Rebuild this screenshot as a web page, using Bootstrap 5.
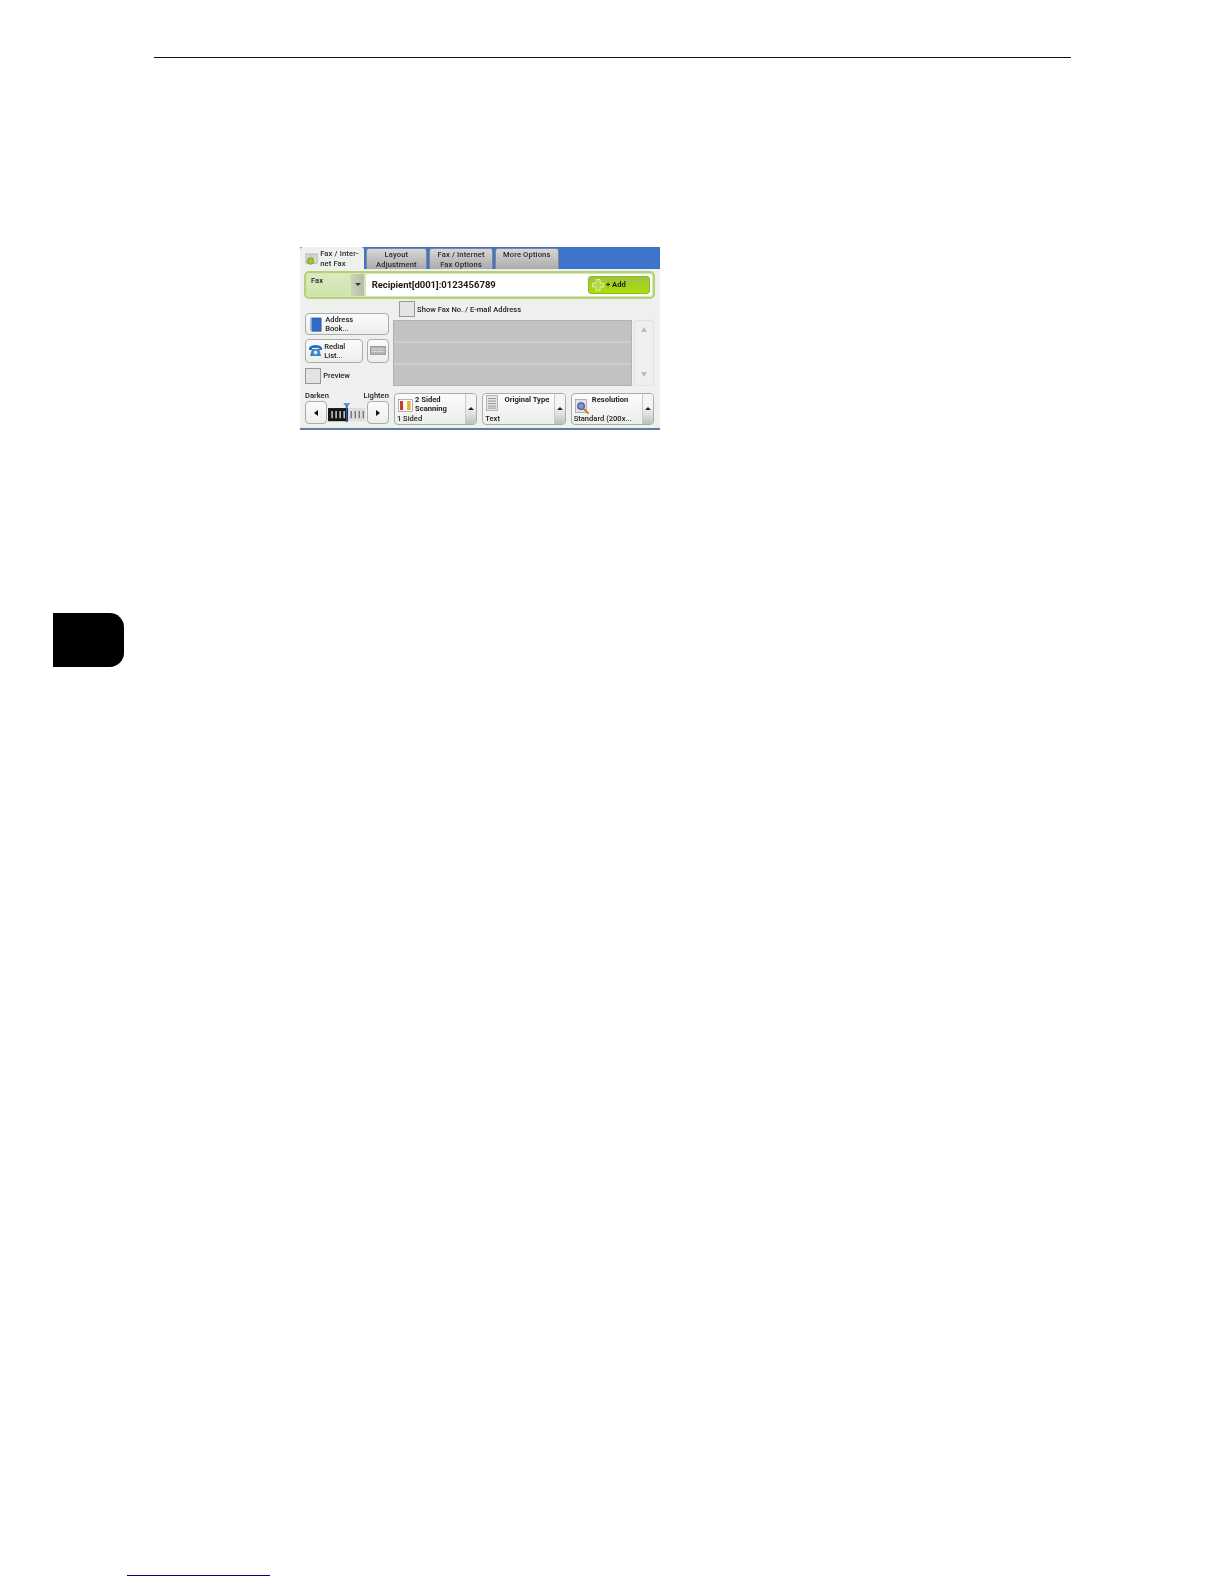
<!DOCTYPE html>
<html lang="en"><head><meta charset="utf-8"><title>Fax</title>
<link rel="stylesheet" href="https://cdn.jsdelivr.net/npm/bootstrap@5.3.0/dist/css/bootstrap.min.css">
<style>
html,body{background:#fff;margin:0;height:1584px;overflow:hidden}
.pagewrap{zoom:1.0101}
.hdrrule{margin:56px 0 0 152.500px;width:908px;height:1.500px;background:#111}
.panel{margin:187.500px 0 0 297px;width:356px;height:181px;background:#eef0ee;border-bottom:2px solid #5d7fa8;font-family:Roboto,"Noto Sans",sans-serif;font-size:7.500px;line-height:9px;color:#222;font-weight:500;filter:blur(.3px);overflow:hidden}
.tabrow{height:21px;background:#3e74c9;padding-left:0;gap:2px;align-items:flex-end}
.tabx{height:20px;width:61px;border-radius:3px 3px 0 0;background:linear-gradient(#d6d7d6,#a9aaa9);border:1px solid #7d8894;border-bottom:0;text-align:center;padding-top:1px;color:#2b2b2b;letter-spacing:.15px}
.tabx.wide{width:63px}
.tabx.active{width:63px;height:21px;background:#eef0ee;border-color:#eef0ee;display:flex;align-items:center;gap:2px;padding:0 0 0 4px;text-align:left}
.greenbar{margin:2px 5px 0 4px;height:28px;border:2px solid #b3d377;border-radius:5px;background:#d6e7b6;padding:1px;gap:2px}
.faxsel{width:42px;background:linear-gradient(#dcebc3,#cfe3ab);padding:2px 4px;border-radius:2px 0 0 2px}
.faxarrow{width:12px;background:linear-gradient(90deg,#c9d4b8,#b5bcab);display:flex;align-items:center;justify-content:center}
.tridown{width:0;height:0;border-left:3.500px solid transparent;border-right:3.500px solid transparent;border-top:3.500px solid #333}
.recip{flex:1;background:#fff;padding:0 2px 0 6px;border-radius:2px;align-items:center;justify-content:space-between}
.reciptxt{font-size:9.400px;font-weight:700;color:#1a1a1a}
.addbtn{width:61px;height:18px;background:linear-gradient(#9cc53c,#aede08);border:1px solid #8eb62d;border-radius:3px;display:flex;align-items:center;gap:1px;padding-left:2px;color:#1a2a00;font-weight:700}
.mainrow{padding:2px 5px 0 5px;gap:4px}
.leftcol{width:83px;padding-top:12px}
.rightcol{width:259px}
.softbtn{background:linear-gradient(#fbfbfb,#eceeec);border:1px solid #a9adab;border-radius:4px;display:flex;align-items:center}
.addr{height:22px;width:83px;padding-left:3px;gap:3px}
.redial{height:23px;width:58px;padding-left:2px;gap:1px}
.kbd{height:23px;width:22px;justify-content:center}
.tick{width:16px;height:16px;border:1px solid #999;background:#e3e5e3;flex:none}
.showrow{padding-left:6px;gap:2px;align-items:center;height:16px}
.listwrap{margin-top:3px;gap:2px;height:65px}
.listbox{width:237px;background:#c1c2c1;border:1px solid #b0b1b0;padding:0}
.listline{flex:1;border-bottom:2px solid #cdcecd}
.listline:last-child{border-bottom:0}
.scrollcol{width:20px;border:1px solid #e0e2e0;border-radius:3px;align-items:center;justify-content:space-between;padding:6px 1px 8px 0}
.tri-up-s{width:0;height:0;border-left:3px solid transparent;border-right:3px solid transparent;border-bottom:5px solid #bcbebc}
.tri-dn-s{width:0;height:0;border-left:3px solid transparent;border-right:3px solid transparent;border-top:5px solid #bcbebc}
.prevrow{margin-top:5px;gap:2px;align-items:center}
.btmrow{margin:7px 5px 0 5px;gap:5px}
.density{width:83px;margin-top:-2px}
.denlabels{height:8px;margin-bottom:2px;justify-content:space-between}
.denctl{height:23px}
.stepbtn{width:22px;height:23px;justify-content:center;flex:none}
.triL{width:0;height:0;border-top:3px solid transparent;border-bottom:3px solid transparent;border-right:4px solid #111}
.triR{width:0;height:0;border-top:3px solid transparent;border-bottom:3px solid transparent;border-left:4px solid #111}
.featbtn{width:82.500px;height:31.500px;align-items:stretch;overflow:hidden}
.featmain{flex:1;min-width:0;padding:1px 2px 0 3px;position:relative}
.featarrow{width:11px;background:linear-gradient(#f3f4f3 45%,#bfc1bf);border-left:1px solid #c8cac8;display:flex;align-items:center;justify-content:center}
.triU{width:0;height:0;border-left:3.500px solid transparent;border-right:3.500px solid transparent;border-bottom:3.500px solid #222}
.feathead{gap:2px}
.featname{font-weight:700;color:#222;white-space:nowrap}
.featval{position:absolute;left:2px;bottom:1px;white-space:nowrap}
.thumb{margin:181px 0 0 52px;width:71px;height:53px;background:#000;border-radius:0 14px 14px 0}
.footrule{margin:899px 0 0 126px;width:141px;height:1.500px;background:#00008b}
</style></head>
<body>
<div class="pagewrap">
<div class="hdrrule"></div>
<div class="panel">
  <div class="tabrow d-flex">
    <div class="tabx active">
      <svg width="13" height="13" viewBox="0 0 13 13"><rect x="1" y="2" width="11" height="9" fill="#dfe2df" stroke="#9a9d9a" stroke-width=".7"/><path d="M3 4h7M3 6h7" stroke="#aaa" stroke-width=".7"/><circle cx="5.500" cy="9" r="3.200" fill="#a5c634" stroke="#5f7e1f" stroke-width=".6"/></svg>
      <span>Fax / Inter-<br>net Fax</span></div>
    <div class="tabx">Layout<br>Adjustment</div>
    <div class="tabx wide">Fax / Internet<br>Fax Options</div>
    <div class="tabx wide">More Options</div>
  </div>
  <div class="greenbar d-flex">
    <div class="faxsel">Fax</div>
    <div class="faxarrow"><span class="tridown"></span></div>
    <div class="recip d-flex">
      <span class="reciptxt">Recipient[d001]:0123456789</span>
      <span class="addbtn"><svg width="14" height="14" viewBox="0 0 14 14"><path d="M5 1.500h4v3.500h3.500v4H9v3.500H5V9H1.500V5H5z" fill="#b6d84a" stroke="#dff0a0" stroke-width=".9"/></svg>+ Add</span>
    </div>
  </div>
  <div class="mainrow d-flex">
    <div class="leftcol">
      <div class="softbtn addr">
        <svg width="13" height="15" viewBox="0 0 13 15"><path d="M2 1h10v13H3a1.500 1.500 0 0 1-1-1z" fill="#2f6cc4" stroke="#1d4b94" stroke-width=".7"/><path d="M2.500 1v13" stroke="#7ea7e0"/></svg>
        <span>Address<br>Book...</span></div>
      <div class="d-flex gap-1 mt-1 redialrow">
        <div class="softbtn redial">
          <svg width="15" height="13" viewBox="0 0 15 13"><path d="M1 4c1-4 12-4 13 0v2h-3V4H4v2H1z" fill="#2f6fb5"/><path d="M4 5h7l2 7H2z" fill="#3c80c6"/><circle cx="7.500" cy="8.500" r="2" fill="#cfe2f5"/></svg>
          <span>Redial<br>List...</span></div>
        <div class="softbtn kbd"><svg width="16" height="9" viewBox="0 0 16 9"><rect x=".5" y=".5" width="15" height="8" fill="#b4b6b4" stroke="#9a9c9a"/><path d="M2 3h12M2 5.500h12" stroke="#ececec" stroke-dasharray="1.500 .8"/></svg></div>
      </div>
      <div class="prevrow d-flex"><span class="tick"></span><span>Preview</span></div>
    </div>
    <div class="rightcol">
      <div class="showrow d-flex"><span class="tick"></span><span>Show Fax No. / E-mail Address</span></div>
      <div class="listwrap d-flex">
        <div class="listbox d-flex flex-column"><div class="listline"></div><div class="listline"></div><div class="listline"></div></div>
        <div class="scrollcol d-flex flex-column"><span class="tri-up-s"></span><span class="tri-dn-s"></span></div>
      </div>
    </div>
  </div>
  <div class="btmrow d-flex">
    <div class="density">
      <div class="denlabels d-flex"><span>Darken</span><span>Lighten</span></div>
      <div class="denctl d-flex">
        <div class="softbtn stepbtn"><span class="triL"></span></div>
        <svg width="39" height="23" viewBox="0 0 39 23"><rect x="1" y="7" width="20" height="13" fill="#151515"/><rect x="21" y="7" width="17" height="13" fill="#dcdddc"/><path d="M5 10v7M9 10v7M13 10v7M17 10v7" stroke="#d8d8d8" stroke-width="1.400"/><path d="M24 10v7M28 10v7M32 10v7M36 10v7" stroke="#777" stroke-width="1.400"/><path d="M16 2h7l-3.500 5z" fill="#5d93d6"/><path d="M19.500 5v16" stroke="#2459b5" stroke-width="1.500"/></svg>
        <div class="softbtn stepbtn"><span class="triR"></span></div>
      </div>
    </div>
    <div class="softbtn featbtn">
      <div class="featmain"><div class="d-flex feathead">
        <svg width="15" height="13" viewBox="0 0 15 13" class="mt-1"><rect x=".5" y=".5" width="14" height="12" fill="#fff" stroke="#888" stroke-width=".6"/><rect x="2" y="2" width="3" height="9" fill="#c83a2a"/><rect x="9" y="2" width="3.500" height="9" fill="#e9b52c"/></svg>
        <span class="featname">2 Sided<br>Scanning</span></div>
        <div class="featval">1 Sided</div></div>
      <div class="featarrow"><span class="triU"></span></div>
    </div>
    <div class="softbtn featbtn">
      <div class="featmain"><div class="d-flex feathead">
        <svg width="12" height="16" viewBox="0 0 12 16"><rect x=".5" y=".5" width="11" height="15" fill="#e6e8e6" stroke="#9a9c9a" stroke-width=".7"/><path d="M2 3.500h8M2 6h8M2 8.500h8M2 11h8M2 13h8" stroke="#8b8d8b" stroke-width=".9"/></svg>
        <span class="featname ms-1">Original Type</span></div>
        <div class="featval">Text</div></div>
      <div class="featarrow"><span class="triU"></span></div>
    </div>
    <div class="softbtn featbtn">
      <div class="featmain"><div class="d-flex feathead">
        <svg width="15" height="16" viewBox="0 0 15 16" class="mt-1"><rect x=".5" y=".5" width="11" height="13" fill="#dfe2ea" stroke="#9a9c9a" stroke-width=".7"/><circle cx="6" cy="7" r="3.300" fill="#7f94c8" stroke="#3b4a7c"/><path d="M8.500 9.500l5 5" stroke="#c9801f" stroke-width="2"/></svg>
        <span class="featname">Resolution</span></div>
        <div class="featval">Standard (200x...</div></div>
      <div class="featarrow"><span class="triU"></span></div>
    </div>
  </div>
</div>
<div class="thumb"></div>
<div class="footrule"></div>
</div>
<script src="https://cdn.jsdelivr.net/npm/bootstrap@5.3.0/dist/js/bootstrap.bundle.min.js"></script>
</body></html>
